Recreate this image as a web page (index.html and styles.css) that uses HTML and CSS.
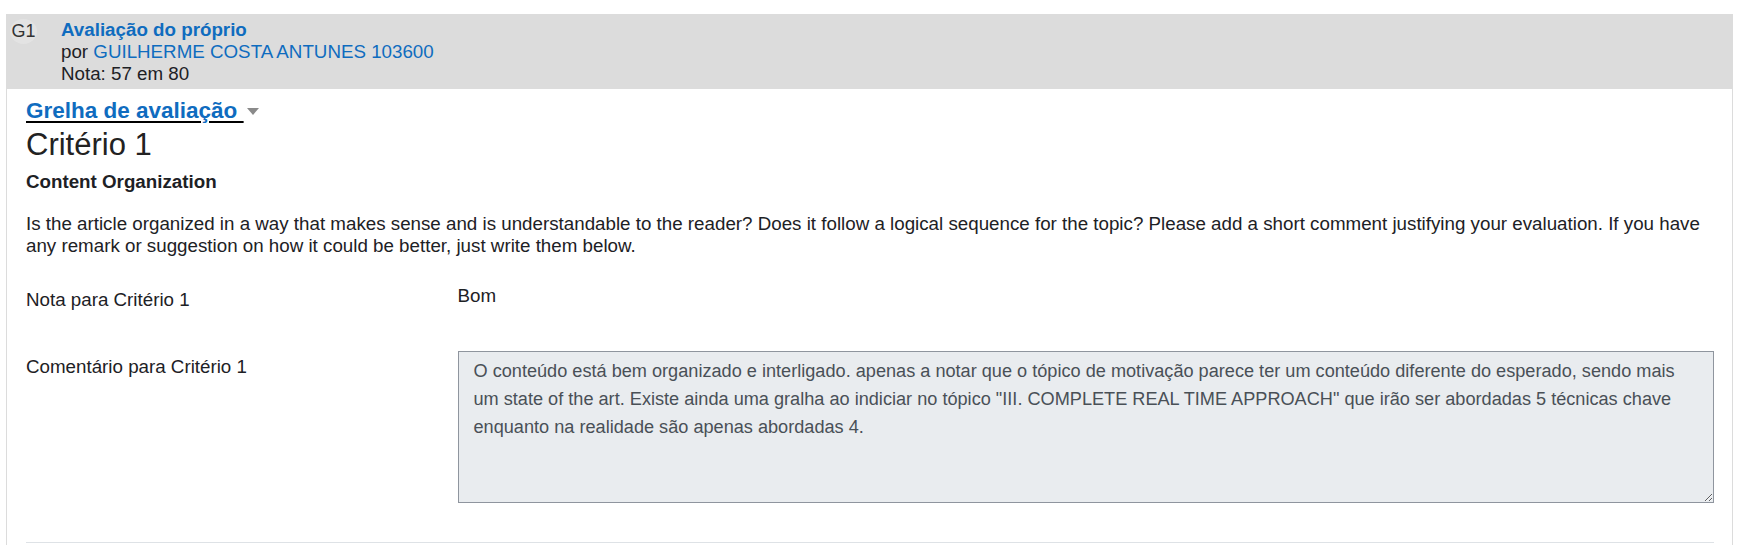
FILE: index.html
```html
<!DOCTYPE html>
<html lang="pt">
<head>
<meta charset="utf-8">
<title>Avaliação do próprio</title>
<link rel="stylesheet" href="styles.css">
</head>
<body>
<div class="assessment">
  <div class="assessment-header">
    <span class="badge-id">G1</span>
    <div class="header-info">
      <div class="title">Avaliação do próprio</div>
      <div class="by">por <a href="#" class="user-link">GUILHERME COSTA ANTUNES 103600</a></div>
      <div class="grade">Nota: 57 em 80</div>
    </div>
  </div>
  <div class="assessment-body">
    <div class="grid-toggle"><a href="#" class="toggle-link">Grelha de avaliação <span class="caret"></span></a></div>
    <h3 class="criterion-title">Critério 1</h3>
    <div class="criterion-name">Content Organization</div>
    <p class="criterion-desc">Is the article organized in a way that makes sense and is understandable to the reader? Does it follow a logical sequence for the topic? Please add a short comment justifying your evaluation. If you have any remark or suggestion on how it could be better, just write them below.</p>
    <div class="form-row form-row-first">
      <div class="form-label">Nota para Critério 1</div>
      <div class="form-value">Bom</div>
    </div>
    <div class="form-row">
      <div class="form-label">Comentário para Critério 1</div>
      <div class="form-value"><textarea class="comment" readonly>O conteúdo está bem organizado e interligado. apenas a notar que o tópico de motivação parece ter um conteúdo diferente do esperado, sendo mais um state of the art. Existe ainda uma gralha ao indiciar no tópico "III. COMPLETE REAL TIME APPROACH" que irão ser abordadas 5 técnicas chave enquanto na realidade são apenas abordadas 4.</textarea></div>
    </div>
    <hr class="separator">
  </div>
</div>
</body>
</html>
```

FILE: styles.css
```css
html, body {
  margin: 0;
  padding: 0;
  background: #ffffff;
}

body {
  font-family: "Liberation Sans", Arial, sans-serif;
  font-size: 18.75px;
  color: #1d2125;
}

.assessment {
  margin: 14px 0 0 6px;
  width: 1727px;
  box-sizing: border-box;
}

.assessment-header {
  display: flex;
  align-items: flex-start;
  background: #dcdcdc;
  padding: 5px 0 4px 4px;
  height: 75px;
  box-sizing: border-box;
}

.badge-id {
  display: flex;
  align-items: center;
  justify-content: center;
  width: 27px;
  height: 25px;
  border-radius: 50%;
  background: #e3e3e3;
  font-size: 18px;
  color: #333333;
  margin-right: 24px;
  flex-shrink: 0;
}

.header-info {
  line-height: 22px;
}

.title {
  color: #0f6cbf;
  font-weight: bold;
}

.by {
  color: #1d2125;
}

.user-link {
  color: #0f6cbf;
  text-decoration: none;
}

.grade {
  color: #1d2125;
}

.assessment-body {
  border-left: 1px solid #dcdcdc;
  border-right: 1px solid #dcdcdc;
  padding: 8px 18px 4px 19px;
}

.grid-toggle {
  font-size: 22.5px;
  line-height: 27px;
  font-weight: bold;
}

.toggle-link {
  color: #0f6cbf;
  text-decoration: underline;
  text-decoration-color: #000000;
  text-decoration-thickness: 2px;
  text-underline-offset: 3px;
}

.caret {
  display: inline-block;
  width: 0;
  height: 0;
  border-left: 6.5px solid transparent;
  border-right: 6.5px solid transparent;
  border-top: 7px solid #8a8a8a;
  margin-left: 3px;
  margin-bottom: 3px;
  vertical-align: baseline;
}

.criterion-title {
  margin: 3px 0 0;
  font-size: 31px;
  line-height: 35px;
  font-weight: normal;
  color: #222222;
}

.criterion-name {
  margin-top: 9px;
  font-weight: bold;
  line-height: 22px;
}

.criterion-desc {
  margin: 20px 0 0;
  line-height: 22.3px;
}

.form-row {
  display: grid;
  grid-template-columns: 431.5px 1fr;
  line-height: 23.4px;
  margin-bottom: 39px;
}

.form-row-first {
  margin-top: 26px;
  margin-bottom: 40px;
}

.form-label {
  padding-top: 4px;
}

.form-value {
  min-width: 0;
}

.comment {
  display: block;
  width: 100%;
  height: 152px;
  box-sizing: border-box;
  margin: 0;
  padding: 6px 15px;
  font-family: "Liberation Sans", Arial, sans-serif;
  font-size: 18.15px;
  line-height: 27.8px;
  color: #495057;
  background: #e9ecef;
  border: 1px solid #8f959e;
  border-radius: 0;
  resize: both;
  outline: none;
}

.separator {
  margin: 0;
  border: 0;
  border-top: 1px solid #dee2e6;
}
```
